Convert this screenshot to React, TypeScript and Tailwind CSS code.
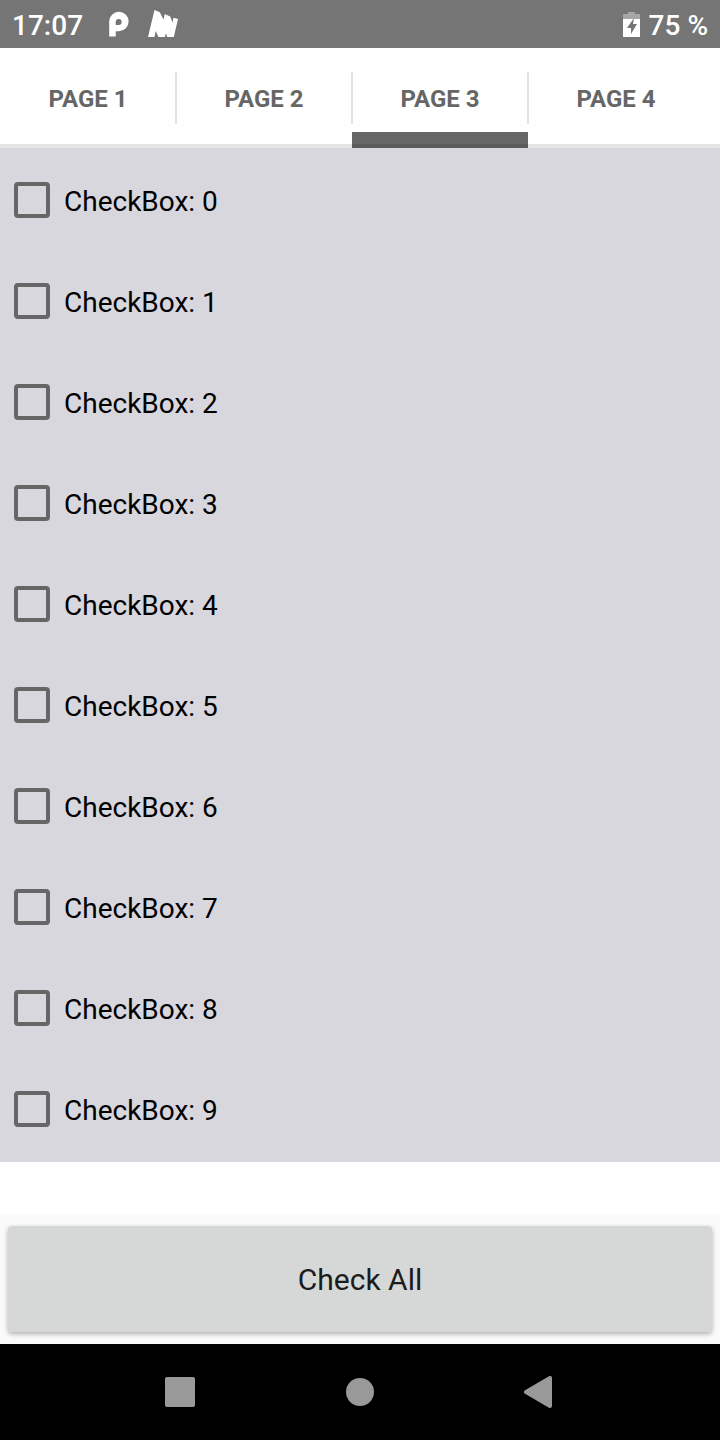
import { useState, type ReactNode } from 'react'

const PAGES = ['Page 1', 'Page 2', 'Page 3', 'Page 4']
const ITEMS = Array.from({ length: 10 }, (_, i) => i)

export default function App() {
  const [page, setPage] = useState(2)
  const [checked, setChecked] = useState<number[]>([])

  const toggle = (id: number) =>
    setChecked((prev) => (prev.includes(id) ? prev.filter((x) => x !== id) : [...prev, id]))

  return (
    <div className="flex min-h-screen flex-col bg-white font-['Roboto',sans-serif]">
      <StatusBar />
      <Tabs active={page} onChange={setPage} />

      <main className="flex flex-1 flex-col">
        <ul className="flex flex-col gap-px bg-[#d8d7de] pt-0.5 pb-[3px]">
          {ITEMS.map((id) => (
            <CheckRow key={id} id={id} checked={checked.includes(id)} onToggle={() => toggle(id)} />
          ))}
        </ul>
      </main>

      <div className="bg-[#fafafa] px-2 py-3">
        <button
          type="button"
          onClick={() => setChecked(ITEMS)}
          className="h-[106px] w-full rounded-sm bg-[#d6d8d7] pt-0.5 text-3xl text-[#1c1c1c] shadow-[0_2px_5px_rgba(0,0,0,0.3)]"
        >
          Check All
        </button>
      </div>

      <NavBar />
    </div>
  )
}

function StatusBar() {
  return (
    <header className="flex h-12 items-center justify-between bg-[#757575] px-3 text-white">
      <div className="flex items-center">
        <span className="pt-1 text-[28px] leading-8 font-medium">17:07</span>
        <svg className="ml-6 h-8 w-6" viewBox="0 0 24 32" fill="currentColor" aria-hidden="true">
          <path
            fillRule="evenodd"
            d="M2.200 28.500V13.500A9.700 9.700 0 1 1 12 23.200H8.700V28.500ZM8.700 17H11.700A3 3 0 1 0 8.700 14Z"
          />
        </svg>
        <svg className="ml-4 h-8 w-8" viewBox="0 0 32 32" fill="currentColor" aria-hidden="true">
          <path d="M1 29L7.500 2L12.800 4.300L16.500 11.500L17.800 6L23.200 8.500L25.600 14.500L26.500 9.700L31 11L26.800 29H20.300L18.800 25L18 29H11.500L8.600 23L7.500 29Z" />
        </svg>
      </div>
      <div className="flex items-center gap-2">
        <svg className="h-7 w-[18px]" viewBox="0 0 18 28" aria-hidden="true">
          <path d="M5 2H12V4H17V9H0V4H5Z" fill="#a6a6a6" />
          <path d="M0 9H17V27H0Z" fill="#fff" />
          <path d="M11 8L4 18H8V24L14 14H10Z" fill="#757575" />
        </svg>
        <span className="pt-1 text-[28px] leading-8 font-medium">75 %</span>
      </div>
    </header>
  )
}

function Tabs({ active, onChange }: { active: number; onChange: (i: number) => void }) {
  return (
    <nav role="tablist" className="flex border-b-4 border-[#e4e4e6] pr-4">
      {PAGES.map((label, i) => (
        <button
          key={label}
          type="button"
          role="tab"
          aria-selected={i === active}
          onClick={() => onChange(i)}
          className="relative h-24 flex-1 pt-1.5 text-2xl font-bold text-[#666] uppercase"
        >
          {label}
          {i < PAGES.length - 1 && (
            <span className="absolute top-6 -right-px h-[52px] w-0.5 bg-[#e4e4e6]" />
          )}
          {i === active && (
            <span className="absolute inset-x-0 -bottom-1 h-4 border-b-4 border-[#5b5b5b] bg-[#666]" />
          )}
        </button>
      ))}
    </nav>
  )
}

function CheckRow({
  id,
  checked,
  onToggle,
}: {
  id: number
  checked: boolean
  onToggle: () => void
}) {
  return (
    <li>
      <label className="flex h-[100px] items-center gap-3.5 px-3.5 text-[28px] leading-8 text-black">
        <input
          type="checkbox"
          checked={checked}
          onChange={onToggle}
          className="size-9 appearance-none rounded-sm border-4 border-[#666] checked:bg-[#666]"
        />
        <span className="pt-1">CheckBox: {id}</span>
      </label>
    </li>
  )
}

function NavBar() {
  const icon = 'h-8 w-8 fill-[#999] stroke-[#999]'

  return (
    <footer className="flex h-24 justify-center bg-black">
      <NavButton label="Recent apps">
        <svg className={icon} viewBox="0 0 32 32">
          <rect x="1" y="1" width="30" height="30" rx="2" stroke="none" />
        </svg>
      </NavButton>
      <NavButton label="Home">
        <svg className={icon} viewBox="0 0 32 32">
          <circle cx="16" cy="16" r="14" stroke="none" />
        </svg>
      </NavButton>
      <NavButton label="Back">
        <svg className={icon} viewBox="0 0 32 32">
          <path d="M2 16L26 2V30Z" strokeWidth="4" strokeLinejoin="round" />
        </svg>
      </NavButton>
    </footer>
  )
}

function NavButton({ label, children }: { label: string; children: ReactNode }) {
  return (
    <button type="button" aria-label={label} className="flex w-1/4 items-center justify-center">
      {children}
    </button>
  )
}
